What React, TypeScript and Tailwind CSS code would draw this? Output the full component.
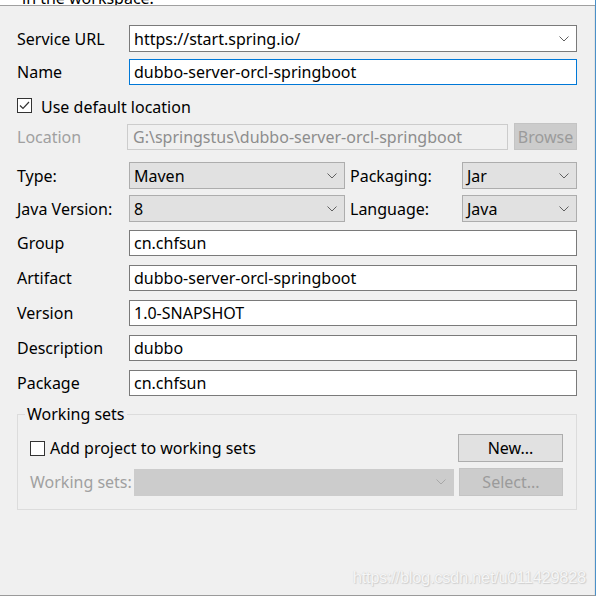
import React from 'react';

const font = { fontFamily: '"Noto Sans", "Noto Sans CJK SC", sans-serif' };

function Chevron({ color = '#606060' }: { color?: string }) {
  return (
    <svg width="10" height="6" viewBox="0 0 10 6" className="shrink-0">
      <polyline points="0.5,0.5 5,5 9.5,0.5" fill="none" stroke={color} strokeWidth="1" />
    </svg>
  );
}

function Label({ text, w = 'w-[112px]', disabled = false }: { text: string; w?: string; disabled?: boolean }) {
  return <div className={`${w} shrink-0 ${disabled ? 'text-[#a0a0a0]' : 'text-black'}`}>{text}</div>;
}

function TextBox({ value, focused = false }: { value: string; focused?: boolean }) {
  return (
    <div
      className={`flex-1 h-[26px] bg-white border flex items-center px-[4px] ${
        focused ? 'border-[#0078d7]' : 'border-[#7a7a7a]'
      }`}
    >
      {value}
    </div>
  );
}

function Combo({ value, w, disabled = false }: { value: string; w: string; disabled?: boolean }) {
  return (
    <div
      className={`${w} h-[27px] border flex items-center justify-between pl-[4px] pr-[7px] ${
        disabled ? 'bg-[#cccccc] border-[#cccccc]' : 'bg-[#e1e1e1] border-[#adadad]'
      }`}
    >
      <span>{value}</span>
      <Chevron color={disabled ? '#a8a8a8' : '#606060'} />
    </div>
  );
}

function FieldRow({ label, value, mt }: { label: string; value: string; mt: string }) {
  return (
    <div className={`flex items-center ${mt}`}>
      <Label text={label} />
      <TextBox value={value} />
    </div>
  );
}

export default function App() {
  return (
    <div
      className="relative w-[596px] h-[596px] bg-[#f0f0f0] text-[16px] leading-none border-r border-r-[#4a90c8] border-b border-b-[#9a9a9a] overflow-hidden flex flex-col"
      style={font}
    >
      {/* cut off header text */}
      <div className="h-[5px] bg-white border-b border-b-[#a0a0a0] box-content overflow-hidden shrink-0">
        <div className="pl-[22px] -mt-[10px]">in the workspace:</div>
      </div>

      <div className="flex-1 flex flex-col pl-[17px] pr-[17px] border-r border-r-[#e3e3e3]">
        {/* Service URL */}
        <div className="flex items-center mt-[19px]">
          <Label text="Service URL" />
          <div className="flex-1 h-[27px] bg-white border border-[#7a7a7a] flex items-center justify-between pl-[4px] pr-[7px]">
            <span>https://start.spring.io/</span>
            <Chevron />
          </div>
        </div>

        <div className="flex items-center mt-[7px]">
          <Label text="Name" />
          <TextBox value="dubbo-server-orcl-springboot" focused />
        </div>

        {/* Use default location */}
        <div className="flex items-center mt-[12px] h-[17px]">
          <div className="w-[15px] h-[15px] border border-[#333333] bg-white flex items-center justify-center">
            <svg width="11" height="9" viewBox="0 0 11 9">
              <polyline points="1,4.5 4,7.5 10,1" fill="none" stroke="#333" strokeWidth="1.2" />
            </svg>
          </div>
          <span className="ml-[9px] mt-[2px]">Use default location</span>
        </div>

        {/* Location */}
        <div className="flex items-center mt-[9px]">
          <Label text="Location" w="w-[110px]" disabled />
          <div className="w-[381px] h-[26px] bg-[#f0f0f0] border border-[#cccccc] flex items-center px-[5px] text-[#8d8d8d]">
            G:\springstus\dubbo-server-orcl-springboot
          </div>
          <div className="ml-[6px] flex-1 h-[27px] bg-[#cccccc] border border-[#c4c4c4] flex items-center justify-center text-[#9b9b9b]">
            Browse
          </div>
        </div>

        {/* Type / Packaging */}
        <div className="flex items-center mt-[12px]">
          <Label text="Type:" />
          <Combo value="Maven" w="w-[216px]" />
          <div className="w-[117px] pl-[5px]">Packaging:</div>
          <Combo value="Jar" w="flex-1" />
        </div>
        <div className="flex items-center mt-[6px]">
          <Label text="Java Version:" />
          <Combo value="8" w="w-[216px]" />
          <div className="w-[117px] pl-[5px]">Language:</div>
          <Combo value="Java" w="flex-1" />
        </div>

        <FieldRow label="Group" value="cn.chfsun" mt="mt-[8px]" />
        <FieldRow label="Artifact" value="dubbo-server-orcl-springboot" mt="mt-[9px]" />
        <FieldRow label="Version" value="1.0-SNAPSHOT" mt="mt-[9px]" />
        <FieldRow label="Description" value="dubbo" mt="mt-[9px]" />
        <FieldRow label="Package" value="cn.chfsun" mt="mt-[9px]" />

        {/* Working sets group */}
        <div className="relative mt-[18px] h-[96px] border border-[#dcdcdc] pl-[12px] pr-[13px]">
          <div className="absolute left-[7px] -top-[9px] px-[2px] bg-[#f0f0f0]">Working sets</div>
          <div className="flex items-center mt-[19px]">
            <div className="w-[15px] h-[15px] border border-[#333333] bg-white" />
            <span className="ml-[5px] flex-1">Add project to working sets</span>
            <div className="w-[105px] h-[28px] bg-[#e1e1e1] border border-[#adadad] flex items-center justify-center">
              New...
            </div>
          </div>
          <div className="flex items-center mt-[6px]">
            <div className="w-[104px] text-[#a0a0a0]">Working sets:</div>
            <Combo value="" w="w-[320px]" disabled />
            <div className="ml-[5px] flex-1 h-[28px] bg-[#cccccc] border border-[#c4c4c4] flex items-center justify-center text-[#9b9b9b]">
              Select...
            </div>
          </div>
        </div>
      </div>

      {/* watermark */}
      <div
        className="absolute right-[9px] bottom-[10px] text-[16.5px] text-[#f6f6f6] tracking-[-0.3px]"
        style={{ fontFamily: '"Liberation Sans", Arial, sans-serif', textShadow: '0 0 1px #c8c8c8, 1px 1px 1px #d0d0d0' }}
      >
        https://blog.csdn.net/u011429828
      </div>
    </div>
  );
}
